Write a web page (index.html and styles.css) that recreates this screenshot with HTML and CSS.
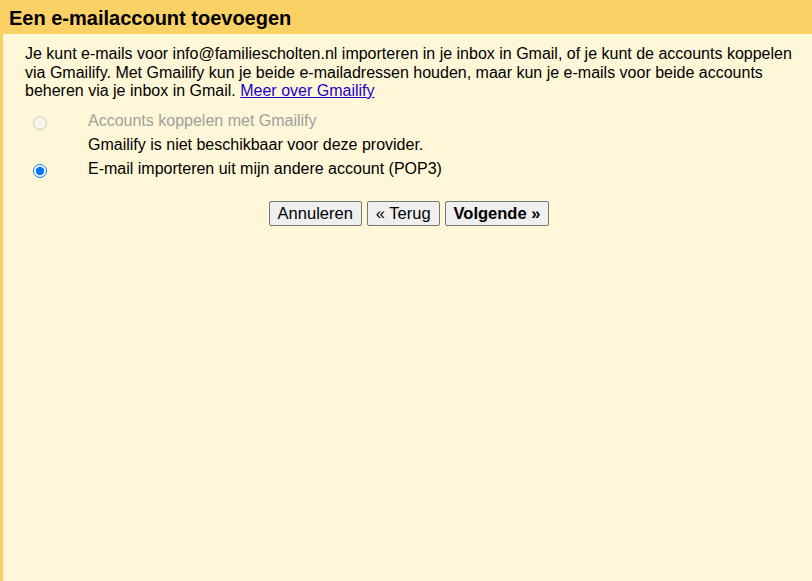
FILE: index.html
```html
<!DOCTYPE html>
<html lang="nl">
<head>
<meta charset="utf-8">
<title>Een e-mailaccount toevoegen</title>
<link rel="stylesheet" href="styles.css">
</head>
<body>
<div class="page">
  <h1 class="title">Een e-mailaccount toevoegen</h1>
  <div class="content">
    <p class="intro">Je kunt e-mails voor info@familiescholten.nl importeren in je inbox in Gmail, of je kunt de accounts koppelen via Gmailify. Met Gmailify kun je beide e-mailadressen houden, maar kun je e-mails voor beide accounts beheren via je inbox in Gmail. <a href="#" class="link">Meer over Gmailify</a></p>
    <div class="options">
      <label class="option disabled">
        <span class="radio-col"><input type="radio" name="mode" disabled></span>
        <span class="option-text">Accounts koppelen met Gmailify</span>
      </label>
      <div class="note">Gmailify is niet beschikbaar voor deze provider.</div>
      <label class="option">
        <span class="radio-col"><input type="radio" name="mode" checked></span>
        <span class="option-text">E-mail importeren uit mijn andere account (POP3)</span>
      </label>
    </div>
    <div class="buttons">
      <button class="btn">Annuleren</button>
      <button class="btn">« Terug</button>
      <button class="btn primary">Volgende »</button>
    </div>
  </div>
</div>
</body>
</html>
```
FILE: styles.css
```css
html, body {
  margin: 0;
  padding: 0;
  height: 100%;
}
body {
  font-family: "Liberation Sans", Arial, sans-serif;
  background: #fff7d7;
  color: #000;
}
.page {
  min-height: 100%;
  display: flex;
  flex-direction: column;
}
.title {
  margin: 0;
  background: #fad165;
  height: 34px;
  line-height: 36px;
  padding: 0 9px;
  font-size: 20px;
  font-weight: bold;
  overflow: hidden;
}
.content {
  flex: 1;
  border-left: 3px solid #fad165;
  padding: 11px 12px 0 22px;
  font-size: 16px;
}
.intro {
  margin: 0;
  line-height: 18.5px;
}
.link {
  color: #2200cc;
  text-decoration: underline;
}
.options {
  margin-top: 8px;
}
.option {
  display: flex;
  align-items: center;
  height: 24px;
  line-height: 24px;
}
.option.disabled {
  color: #a0a0a0;
}
.radio-col {
  width: 63px;
  display: flex;
  align-items: center;
}
.radio-col input {
  margin: 5px 0 0 8px;
  width: 14px;
  height: 14px;
}
.note {
  padding-left: 63px;
  height: 24px;
  line-height: 24px;
}
.buttons {
  display: flex;
  justify-content: center;
  gap: 5px;
  margin-top: 20px;
  padding-right: 7px;
}
.btn {
  font-family: "Liberation Sans", Arial, sans-serif;
  font-size: 16.5px;
  height: 25px;
  padding: 0 8px;
  background: #efefef;
  border: 1px solid #767676;
  border-radius: 2px;
  color: #000;
}
.btn.primary {
  font-weight: bold;
}
```
